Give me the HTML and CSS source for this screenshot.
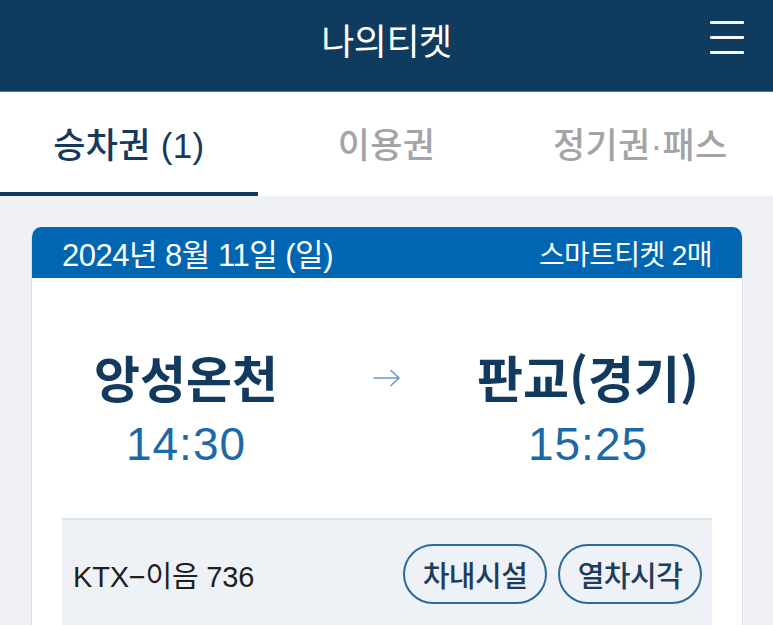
FILE: index.html
```html
<!DOCTYPE html>
<html lang="ko">
<head>
<meta charset="utf-8">
<title>나의티켓</title>
<link rel="stylesheet" href="styles.css">
</head>
<body>
<header class="topbar">
  <div class="topbar-spacer"></div>
  <h1 class="topbar-title">나의티켓</h1>
  <div class="menu-btn" aria-label="메뉴">
    <span></span><span></span><span></span>
  </div>
</header>
<nav class="tabs">
  <div class="tab active">승차권 (1)</div>
  <div class="tab">이용권</div>
  <div class="tab">정기권·패스</div>
</nav>
<main class="content">
  <section class="ticket">
    <div class="ticket-head">
      <span class="ticket-date">2024년 8월 11일 (일)</span>
      <span class="ticket-count">스마트티켓 2매</span>
    </div>
    <div class="ticket-body">
      <div class="route">
        <div class="stop">
          <div class="stop-name">앙성온천</div>
          <div class="stop-time">14:30</div>
        </div>
        <div class="route-arrow">
          <svg width="28" height="18" viewBox="0 0 28 18"><path d="M1 9H26M18 1.5L26 9L18 16.5" fill="none" stroke="#6b9dc9" stroke-width="1.6" stroke-linecap="round" stroke-linejoin="round"/></svg>
        </div>
        <div class="stop">
          <div class="stop-name">판교(경기)</div>
          <div class="stop-time">15:25</div>
        </div>
      </div>
      <div class="train">
        <div class="train-name">KTX−이음 736</div>
        <div class="train-actions">
          <button class="pill">차내시설</button>
          <button class="pill">열차시각</button>
        </div>
      </div>
    </div>
  </section>
</main>
</body>
</html>
```
FILE: styles.css
```css
* { box-sizing: border-box; }
html, body { margin: 0; padding: 0; }
body {
  width: 773px;
  height: 625px;
  overflow: hidden;
  background: #f0f1f5;
  font-family: "Liberation Sans", "Noto Sans CJK KR", sans-serif;
}
.topbar {
  height: 92px;
  background: #0e3b5e;
  border-bottom: 1px solid #4f7496;
  display: grid;
  grid-template-columns: 34px 1fr 34px;
  align-items: center;
  padding: 0 29px 14px;
}
.topbar-title {
  margin: 0;
  text-align: center;
  color: #ffffff;
  font-family: "Noto Sans CJK KR", sans-serif;
  font-weight: 400;
  font-size: 36px;
  line-height: 40px;
  letter-spacing: -0.5px;
}
.menu-btn {
  display: flex;
  flex-direction: column;
  gap: 12px;
  margin-top: -2px;
}
.menu-btn span {
  display: block;
  height: 3px;
  background: #f4f7fa;
  border-radius: 1px;
}
.tabs {
  display: grid;
  grid-template-columns: repeat(3, 1fr);
  background: #ffffff;
  height: 104px;
}
.tab {
  display: flex;
  align-items: center;
  justify-content: center;
  font-family: "Liberation Sans", "Noto Sans CJK KR", sans-serif;
  font-size: 35px;
  font-weight: 500;
  color: #a4a4a6;
  border-bottom: 4px solid transparent;
  letter-spacing: 0.3px;
}
.tab:last-child {
  padding-right: 8px;
}
.tab.active {
  color: #163a5c;
  border-bottom-color: #0e3b5e;
}
.content {
  padding: 31px 30px 0 31px;
}
.ticket {
  background: #ffffff;
  border-radius: 10px 10px 0 0;
  border: 1px solid #dfe2e8;
  border-top: none;
  overflow: hidden;
}
.ticket-head {
  height: 51px;
  background: #0066b2;
  color: #ffffff;
  display: flex;
  align-items: center;
  justify-content: space-between;
  padding: 0 30px 0 30px;
}
.ticket-date {
  font-size: 31px;
  letter-spacing: -0.5px;
}
.ticket-count {
  font-size: 28px;
  letter-spacing: -0.6px;
}
.ticket-body {
  padding: 68px 30px 0;
}
.route {
  display: grid;
  grid-template-columns: 1fr 154px 1fr;
  align-items: start;
}
.stop {
  display: flex;
  flex-direction: column;
  align-items: center;
  gap: 13px;
}
.stop-name {
  font-family: "Noto Sans CJK KR", sans-serif;
  font-weight: 700;
  font-size: 50px;
  line-height: 60px;
  color: #12395e;
  letter-spacing: 0;
}
.stop-time {
  font-size: 46px;
  line-height: 50px;
  color: #1c69a8;
  letter-spacing: 1px;
}
.route-arrow {
  display: flex;
  justify-content: center;
  padding-top: 23px;
}
.train {
  margin-top: 49px;
  background: #eef1f6;
  border-top: 2px solid #dde1e8;
  display: flex;
  align-items: center;
  justify-content: space-between;
  padding: 24px 10px 30px 11px;
}
.train-name {
  font-size: 29px;
  color: #1f1f1f;
  letter-spacing: -0.2px;
}
.train-actions {
  display: flex;
  gap: 11px;
}
.pill {
  width: 144px;
  height: 60px;
  border: 2px solid #2c6a97;
  border-radius: 30px;
  background: transparent;
  font-family: "Noto Sans CJK KR", sans-serif;
  font-size: 29px;
  font-weight: 500;
  color: #1d3d5d;
  padding: 0;
  letter-spacing: -0.5px;
}
```
